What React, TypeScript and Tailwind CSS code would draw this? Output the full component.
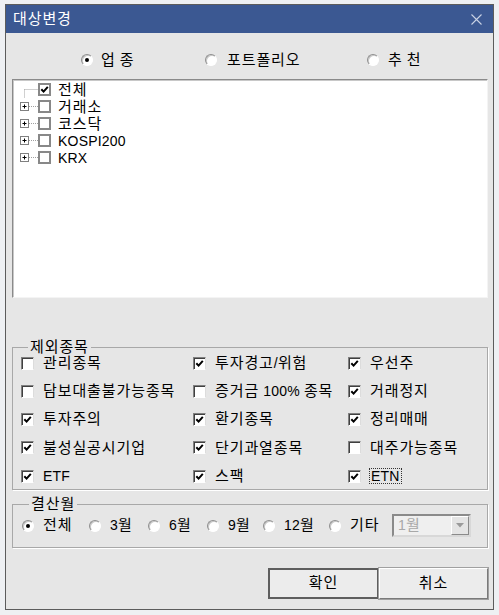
import React from "react";

const FONT = { fontFamily: '"Liberation Sans", "Noto Sans CJK KR", sans-serif' };

// Hangul runs are set a bit larger to match the Gulim look, latin stays at 14px
function T({ text }: { text: string }) {
  const parts = text.split(/([가-힣]+)/);
  return (
    <>
      {parts.map((p, i) =>
        p ? (
          <span
            key={i}
            className={/[가-힣]/.test(p) ? "text-[15px] tracking-[0.9px]" : "tracking-[0.2px]"}
          >
            {p}
          </span>
        ) : null
      )}
    </>
  );
}

function Check() {
  return (
    <svg width="9" height="9" viewBox="0 0 9 9" className="block">
      <path d="M1.3 4.2 L3.6 6.6 L7.8 1.8" fill="none" stroke="#000" strokeWidth="2" />
    </svg>
  );
}

function Checkbox({ checked }: { checked?: boolean }) {
  return (
    <span className="flex h-[13px] w-[13px] shrink-0 items-center justify-center border border-t-[#808080] border-l-[#808080] border-b-white border-r-[#dcdcdc] bg-white shadow-[inset_1px_1px_0_#404040]">
      {checked && <Check />}
    </span>
  );
}

function TreeCheck({ checked }: { checked?: boolean }) {
  return (
    <span className="flex h-[13px] w-[13px] shrink-0 items-center justify-center border-2 border-[#888888] bg-white">
      {checked && <Check />}
    </span>
  );
}

function Radio({ checked }: { checked?: boolean }) {
  return (
    <span className="flex h-[12px] w-[12px] shrink-0 items-center justify-center rounded-full border border-t-[#8e8e8e] border-l-[#8e8e8e] border-b-white border-r-white bg-white shadow-[inset_1px_1px_0_#c8c8c8]">
      {checked && <span className="h-[4px] w-[4px] rounded-full bg-black" />}
    </span>
  );
}

function TreeGutter({ first }: { first?: boolean }) {
  return (
    <svg width="22" height="17" viewBox="0 0 22 17" className="block shrink-0">
      {first ? (
        <>
          <path d="M8.5 8.5 V17" stroke="#a0a0a0" strokeDasharray="1 1" />
          <path d="M8.5 8.5 H22" stroke="#a0a0a0" strokeDasharray="1 1" />
        </>
      ) : (
        <>
          <path d="M13 8.5 H22" stroke="#a0a0a0" strokeDasharray="1 1" />
          <rect x="4.5" y="4.5" width="8" height="8" fill="#fff" stroke="#808080" />
          <path d="M6.5 8.5 H10.5 M8.5 6.5 V10.5" stroke="#000" />
        </>
      )}
    </svg>
  );
}

const treeItems = [
  { label: "전체", checked: true, first: true },
  { label: "거래소" },
  { label: "코스닥" },
  { label: "KOSPI200" },
  { label: "KRX" },
];

const excluded: { label: string; checked: boolean; focus?: boolean }[][] = [
  [
    { label: "관리종목", checked: false },
    { label: "투자경고/위험", checked: true },
    { label: "우선주", checked: true },
  ],
  [
    { label: "담보대출불가능종목", checked: false },
    { label: "증거금 100% 종목", checked: false },
    { label: "거래정지", checked: true },
  ],
  [
    { label: "투자주의", checked: true },
    { label: "환기종목", checked: true },
    { label: "정리매매", checked: true },
  ],
  [
    { label: "불성실공시기업", checked: true },
    { label: "단기과열종목", checked: true },
    { label: "대주가능종목", checked: false },
  ],
  [
    { label: "ETF", checked: true },
    { label: "스팩", checked: true },
    { label: "ETN", checked: true, focus: true },
  ],
];

const colWidths = ["w-[172px]", "w-[155px]", "flex-1"];

const months = [
  { label: "전체", w: "w-[67px]", checked: true },
  { label: "3월", w: "w-[59px]" },
  { label: "6월", w: "w-[59px]" },
  { label: "9월", w: "w-[56px]" },
  { label: "12월", w: "w-[66px]" },
  { label: "기타", w: "w-[63px]" },
];

export default function App() {
  return (
    <div
      className="h-[615px] w-[499px] overflow-hidden bg-[#eef0f3] pl-[5px] pt-[4px] text-[14px] text-black"
      style={FONT}
    >
      <div className="flex h-[606px] w-[489px] flex-col border border-[#5c5c5c] bg-[#e6e6e6]">
        {/* title bar */}
        <div className="flex h-[28px] items-center justify-between bg-[#3b5892] pl-[7px] pr-[11px]">
          <span className="text-white">
            <T text="대상변경" />
          </span>
          <svg width="11" height="11" viewBox="0 0 11 11">
            <path d="M0.5 0.5 L10.5 10.5 M10.5 0.5 L0.5 10.5" stroke="#c9d2e4" strokeWidth="1.1" />
          </svg>
        </div>

        {/* market type radios */}
        <div className="flex h-[46px] items-start pl-[75px] pt-[19px]">
          <label className="flex h-[16px] w-[124px] items-center gap-[8px]">
            <Radio checked />
            <span>
              <T text="업 종" />
            </span>
          </label>
          <label className="flex h-[16px] w-[162px] items-center gap-[10px]">
            <Radio />
            <span>
              <T text="포트폴리오" />
            </span>
          </label>
          <label className="flex h-[16px] items-center gap-[9px]">
            <Radio />
            <span>
              <T text="추 천" />
            </span>
          </label>
        </div>

        {/* tree */}
        <div className="ml-[6px] h-[219px] w-[476px] border border-t-[#8a8a8a] border-l-[#8a8a8a] border-b-[#f4f4f4] border-r-[#f4f4f4] bg-white shadow-[inset_1px_1px_0_#c8c8c8] pl-[3px] pt-[1px]">
          {treeItems.map((item) => (
            <div key={item.label} className="flex h-[17px] items-center">
              <TreeGutter first={item.first} />
              <TreeCheck checked={item.checked} />
              <span className="ml-[7px] leading-none">
                <T text={item.label} />
              </span>
            </div>
          ))}
        </div>

        {/* excluded stocks */}
        <fieldset className="ml-[6px] mt-[41px] w-[476px] border border-[#a8a8a8] pb-[5px] pl-[8px] shadow-[1px_1px_0_#fff]">
          <legend className="ml-[7px] px-[2px] leading-[16px]">
            <T text="제외종목" />
          </legend>
          <div className="flex flex-col gap-y-[12.3px]">
            {excluded.map((row, i) => (
              <div key={i} className="flex h-[16px] items-center">
                {row.map((c, j) => (
                  <label key={c.label} className={`flex items-center gap-[9px] ${colWidths[j]}`}>
                    <Checkbox checked={c.checked} />
                    <span
                      className={
                        c.focus
                          ? "whitespace-nowrap px-[1px] leading-[14px] outline outline-1 outline-dotted outline-[#333]"
                          : "whitespace-nowrap"
                      }
                    >
                      <T text={c.label} />
                    </span>
                  </label>
                ))}
              </div>
            ))}
          </div>
        </fieldset>

        {/* settlement month */}
        <fieldset className="ml-[6px] mt-[6px] w-[476px] border border-[#a8a8a8] pb-[10px] pl-[9px] pt-[2px] shadow-[1px_1px_0_#fff]">
          <legend className="ml-[7px] px-[2px] leading-[16px]">
            <T text="결산월" />
          </legend>
          <div className="flex h-[23px] items-center">
            {months.map((m) => (
              <label key={m.label} className={`flex items-center gap-[9px] ${m.w}`}>
                <Radio checked={m.checked} />
                <span className="whitespace-nowrap">
                  <T text={m.label} />
                </span>
              </label>
            ))}
            <div className="flex h-[23px] w-[79px] items-center justify-between border-2 border-t-[#8a8a8a] border-l-[#8a8a8a] border-b-[#d8d8d8] border-r-[#d8d8d8] bg-[#efefef] pl-[4px]">
              <span className="text-[#a8a8a8]">
                <T text="1월" />
              </span>
              <span className="flex h-[19px] w-[18px] items-center justify-center border border-t-white border-l-white border-b-[#8a8a8a] border-r-[#8a8a8a] bg-[#e4e4e4]">
                <svg width="8" height="5" viewBox="0 0 8 5">
                  <path d="M0 0 H8 L4 4.5 Z" fill="#9a9a9a" />
                </svg>
              </span>
            </div>
          </div>
        </fieldset>

        {/* buttons */}
        <div className="mt-[20px] flex pl-[262px]">
          <button className="h-[31px] w-[111px] border-2 border-[#5e5e5e] bg-[#ececec]">
            <T text="확인" />
          </button>
          <button className="h-[31px] w-[109px] border border-t-white border-l-white border-b-[#7a7a7a] border-r-[#7a7a7a] bg-[#ececec] shadow-[0_0_0_1px_#a0a0a0]">
            <T text="취소" />
          </button>
        </div>
      </div>
    </div>
  );
}
